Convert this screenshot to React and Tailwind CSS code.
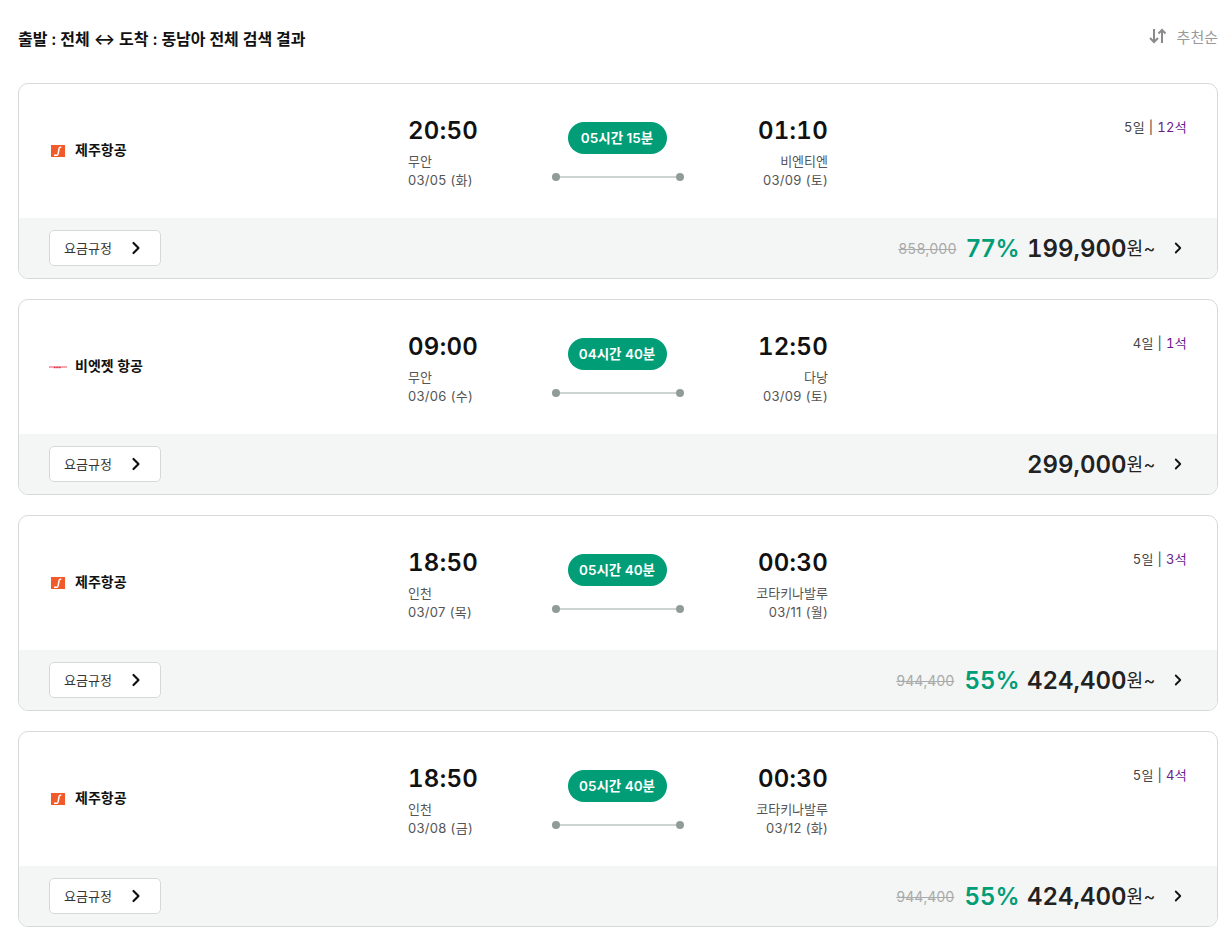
import { ChevronRight } from 'lucide-react';

const FLIGHTS = [
    { airline: 'jeju', name: '제주항공', depTime: '20:50', depCity: '무안', depDate: '03/05 (화)', duration: '05시간 15분', arrTime: '01:10', arrCity: '비엔티엔', arrDate: '03/09 (토)', days: '5일', seats: '12석', oldPrice: '858,000', rate: '77%', price: '199,900' },
    { airline: 'vietjet', name: '비엣젯 항공', depTime: '09:00', depCity: '무안', depDate: '03/06 (수)', duration: '04시간 40분', arrTime: '12:50', arrCity: '다낭', arrDate: '03/09 (토)', days: '4일', seats: '1석', price: '299,000' },
    { airline: 'jeju', name: '제주항공', depTime: '18:50', depCity: '인천', depDate: '03/07 (목)', duration: '05시간 40분', arrTime: '00:30', arrCity: '코타키나발루', arrDate: '03/11 (월)', days: '5일', seats: '3석', oldPrice: '944,400', rate: '55%', price: '424,400' },
    { airline: 'jeju', name: '제주항공', depTime: '18:50', depCity: '인천', depDate: '03/08 (금)', duration: '05시간 40분', arrTime: '00:30', arrCity: '코타키나발루', arrDate: '03/12 (화)', days: '5일', seats: '4석', oldPrice: '944,400', rate: '55%', price: '424,400' },
];

function AirlineLogo({ airline }) {
    if (airline === 'jeju') {
        return (
            <svg width="14" height="12" viewBox="0 0 14 12" className="mx-[2px]">
                <rect width="14" height="12" fill="#f15a29" />
                <path d="M3 10.2h2.6c.9 0 1.3-.5 1.5-1.3l1-5.4c.2-.8.5-1.2 1.2-1.2h1" fill="none" stroke="#fff" strokeWidth="1.5" />
            </svg>
        );
    }
    return (
        <svg width="18" height="4" viewBox="0 0 18 4">
            <path d="M0 2h18" stroke="#ee4c5f" strokeWidth="1" />
            <path d="M5 2.5h7" stroke="#d8233a" strokeWidth="1.6" strokeDasharray="1 .6" />
        </svg>
    );
}

function FlightCard({ flight }) {
    return (
        <div className="w-[1200px] h-[196px] flex flex-col border border-[#d5dad9] rounded-[10px] overflow-hidden bg-white">
            <div className="h-[134px] flex">
                <div className="w-[389px] pl-[30px] pt-[58px] flex items-start">
                    <div className="h-[14px] w-[18px] flex items-center justify-center mt-[2px]">
                        <AirlineLogo airline={flight.airline} />
                    </div>
                    <span className="ml-[8px] text-[14px] leading-[16px] font-semibold text-[#111]">{flight.name}</span>
                </div>

                <div className="w-[100px] pt-[31px]">
                    <div className="text-[24px] leading-[32px] font-semibold tabular-nums tracking-[0.3px] text-[#111] w-[70px] text-right">{flight.depTime}</div>
                    <div className="mt-[5px] text-[13px] leading-[19px] text-[#555]">{flight.depCity}</div>
                    <div className="text-[13px] leading-[18px] tracking-[0.3px] text-[#555]">{flight.depDate}</div>
                </div>

                <div className="w-[132px] ml-[44px] pt-[38px] flex flex-col items-center">
                    <div className="h-[32px] w-[99px] -ml-[2px] rounded-full bg-[#009d77] text-white text-[13.5px] font-semibold flex items-center justify-center">
                        {flight.duration}
                    </div>
                    <div className="mt-[19px] w-full flex items-center">
                        <span className="w-[8px] h-[8px] rounded-full bg-[#8f9c98]" />
                        <span className="flex-1 h-[2px] bg-[#ccd4d2]" />
                        <span className="w-[8px] h-[8px] rounded-full bg-[#8f9c98]" />
                    </div>
                </div>

                <div className="w-[144px] pt-[31px] text-right">
                    <div className="text-[24px] leading-[32px] font-semibold tabular-nums tracking-[0.3px] text-[#111]">{flight.arrTime}</div>
                    <div className="mt-[5px] text-[13px] leading-[19px] text-[#555]">{flight.arrCity}</div>
                    <div className="text-[13px] leading-[18px] tracking-[0.3px] text-[#555]">{flight.arrDate}</div>
                </div>

                <div className="flex-1 pr-[30px] pt-[34px] text-right text-[13px] leading-[18px] tabular-nums tracking-[0.3px] text-[#444]">
                    {flight.days} | <span className="text-[#6a1b8a]">{flight.seats}</span>
                </div>
            </div>

            <div className="h-[60px] bg-[#f4f6f6] flex items-center justify-between pl-[30px] pr-[30px]">
                <button className="w-[112px] h-[36px] bg-white border border-[#d5dad9] rounded-[5px] flex items-center pl-[14px] pt-[1px] text-[13px] text-[#333]">
                    요금규정
                    <ChevronRight size={20} strokeWidth={2.6} className="ml-[14px] -mt-[1px] text-[#111]" />
                </button>

                <div className="flex items-center pt-[1px]">
                    {flight.oldPrice && (
                        <span className="text-[14px] tabular-nums text-[#aaa] line-through mr-[10px]">{flight.oldPrice}</span>
                    )}
                    {flight.rate && (
                        <span className="text-[24px] leading-[32px] font-semibold tracking-[0.4px] text-[#009d77] mr-[7px]">{flight.rate}</span>
                    )}
                    <span className="text-[24px] leading-[32px] font-semibold tabular-nums text-[#222]">{flight.price}</span>
                    <span className="text-[18px] leading-[32px] tracking-[0.5px] text-[#222]">원~</span>
                    <ChevronRight size={18} strokeWidth={2.4} className="ml-[13px] -mt-[1px] text-[#111]" />
                </div>
            </div>
        </div>
    );
}

function App() {
    return (
        <div className="w-[1229px] min-h-[934px] bg-white pl-[18px] font-['Inter','Noto_Sans_CJK_KR',sans-serif]">
            <div className="w-[1200px] h-[83px] flex items-start justify-between">
                <h2 className="mt-[28px] text-[16px] leading-[23px] font-semibold tracking-[-0.05px] text-[#111]">
                    출발 : 전체 ↔ 도착 : 동남아 전체 검색 결과
                </h2>
                <div className="mt-[27px] flex items-center text-[15px] leading-[21px] text-[#999]">
                    <svg width="18" height="16" viewBox="0 0 18 16" fill="none" stroke="#8a8a8a" strokeWidth="2" className="mr-[10px] -mt-[4px]">
                        <path d="M5 1v13M1 10l4 4 4-4" />
                        <path d="M13 15V2M9.5 5.5 13 2l3.5 3.5" />
                    </svg>
                    추천순
                </div>
            </div>

            <div className="flex flex-col gap-[20px]">
                {FLIGHTS.map((flight, i) => (
                    <FlightCard key={i} flight={flight} />
                ))}
            </div>
        </div>
    );
}

export default App;
